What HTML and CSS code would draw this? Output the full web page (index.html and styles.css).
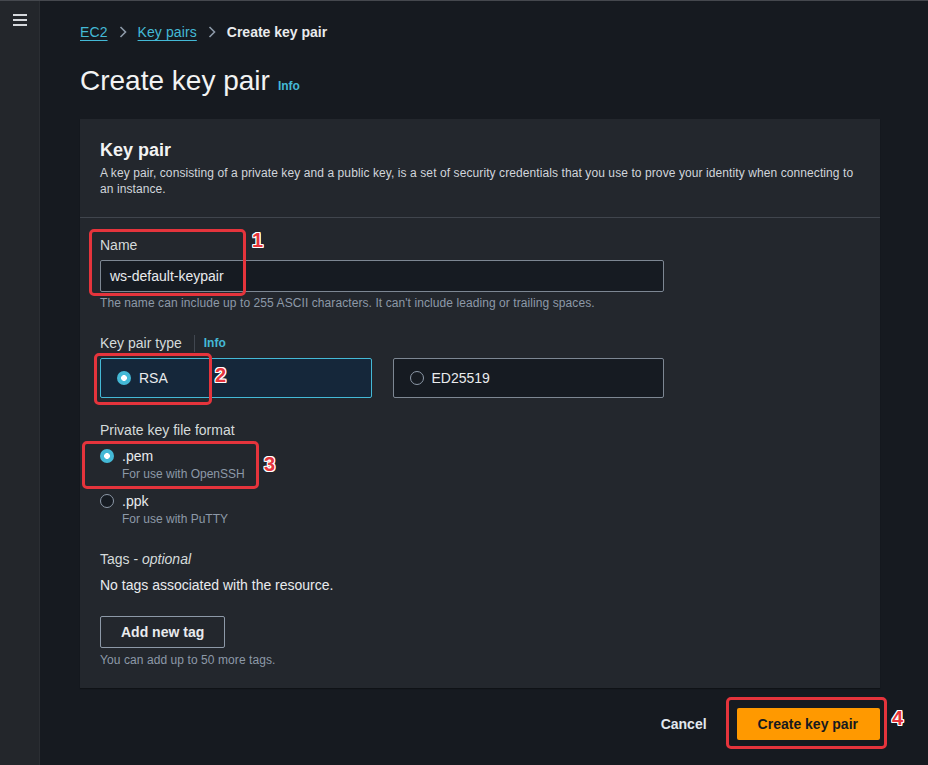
FILE: index.html
```html
<!DOCTYPE html>
<html lang="en">
<head>
<meta charset="utf-8">
<title>Create key pair</title>
<link rel="stylesheet" href="styles.css">
</head>
<body>
<div class="app">
  <aside class="sidebar">
    <svg class="burger" width="14" height="12" viewBox="0 0 14 12"><rect x="0" y="0" width="14" height="2"/><rect x="0" y="5" width="14" height="2"/><rect x="0" y="10" width="14" height="2"/></svg>
  </aside>
  <main class="page">
    <nav class="crumbs">
      <a class="link" href="#">EC2</a>
      <svg class="chev" width="8" height="12" viewBox="0 0 8 12"><path d="M1.5 1 L6.5 6 L1.5 11" fill="none" stroke-width="1.6"/></svg>
      <a class="link" href="#">Key pairs</a>
      <svg class="chev" width="8" height="12" viewBox="0 0 8 12"><path d="M1.5 1 L6.5 6 L1.5 11" fill="none" stroke-width="1.6"/></svg>
      <span class="current">Create key pair</span>
    </nav>
    <h1 class="title"><span>Create key pair</span><span class="info">Info</span></h1>

    <section class="card">
      <header class="card-head">
        <h2 class="card-title">Key pair</h2>
        <p class="card-desc">A key pair, consisting of a private key and a public key, is a set of security credentials that you use to prove your identity when connecting to an instance.</p>
      </header>
      <div class="card-body">
        <div class="field">
          <label class="label">Name</label>
          <div class="input">ws-default-keypair</div>
          <p class="hint">The name can include up to 255 ASCII characters. It can't include leading or trailing spaces.</p>
        </div>

        <div class="field gap">
          <div class="label with-info"><span>Key pair type</span><span class="sep"></span><span class="info">Info</span></div>
          <div class="tiles">
            <div class="tile selected"><span class="radio on"></span><span>RSA</span></div>
            <div class="tile"><span class="radio"></span><span>ED25519</span></div>
          </div>
        </div>

        <div class="field gap">
          <div class="label">Private key file format</div>
          <div class="options">
            <div class="option">
              <span class="radio on"></span>
              <div class="opt-text"><div class="opt-name">.pem</div><div class="opt-desc">For use with OpenSSH</div></div>
            </div>
            <div class="option">
              <span class="radio"></span>
              <div class="opt-text"><div class="opt-name">.ppk</div><div class="opt-desc">For use with PuTTY</div></div>
            </div>
          </div>
        </div>

        <div class="field gap">
          <div class="label">Tags - <i>optional</i></div>
          <p class="empty">No tags associated with the resource.</p>
          <button class="btn-normal">Add new tag</button>
          <p class="hint small-gap">You can add up to 50 more tags.</p>
        </div>
      </div>
    </section>

    <footer class="actions">
      <button class="btn-link">Cancel</button>
      <button class="btn-primary">Create key pair</button>
    </footer>

    <div class="mark m1"></div><span class="num n1">1</span>
    <div class="mark m2"></div><span class="num n2">2</span>
    <div class="mark m3"></div><span class="num n3">3</span>
    <div class="mark m4"></div><span class="num n4">4</span>
  </main>
</div>
</body>
</html>
```

FILE: styles.css
```css
* { box-sizing: border-box; }
html, body { margin: 0; padding: 0; }
body {
  background: #161a20;
  color: #d1d5db;
  font-family: "Liberation Sans", Arial, sans-serif;
  font-size: 14px;
  border-top: 1px solid #45484e;
}
.app { display: flex; min-height: 764px; }
.sidebar {
  width: 40px;
  flex: none;
  background: #23262b;
  border-right: 1px solid #2b2e33;
  padding: 13px 0 0 13px;
}
.burger { display: block; fill: #d5d8dc; }
.page {
  position: relative;
  flex: 1;
  padding: 0 48px 0 40px;
}
.crumbs {
  display: flex;
  align-items: center;
  height: 20px;
  margin-top: 21px;
  gap: 11px;
}
.link { color: #44b9d6; text-decoration: underline; text-underline-offset: 3px; letter-spacing: 0.1px; }
.chev { stroke: #8d99a8; }
.current { font-weight: bold; color: #e9ebed; }
.title {
  display: flex;
  align-items: baseline;
  gap: 8px;
  margin: 20px 0 0 0;
  height: 37px;
  font-size: 28px;
  font-weight: normal;
  line-height: 37px;
  color: #f2f3f3;
}
.info { font-size: 12px; font-weight: bold; color: #44b9d6; }
.card {
  margin-top: 20px;
  background: #23272d;
  box-shadow: 0 1px 1px rgba(0,0,0,0.3);
}
.card-head {
  padding: 20px 20px 20px 20px;
  border-bottom: 1px solid #40454d;
}
.card-title {
  margin: 0;
  font-size: 18px;
  line-height: 22px;
  font-weight: bold;
  color: #f2f3f3;
}
.card-desc {
  margin: 4px 0 0 0;
  font-size: 12px;
  line-height: 16px;
  letter-spacing: 0.09px;
  color: #d1d5db;
}
.card-body { padding: 17px 20px 20px 20px; }
.field { max-width: 564px; }
.field.gap { margin-top: 22px; }
.label {
  display: block;
  line-height: 20px;
  color: #d5dbdb;
}
.with-info { display: flex; align-items: center; }
.sep { width: 1px; height: 17px; background: #414750; margin: 0 9px 0 12px; }
.input {
  margin-top: 5px;
  height: 32px;
  border: 1px solid #7d8793;
  border-radius: 2px;
  background: #161b22;
  color: #e9ebed;
  line-height: 30px;
  padding: 0 9px;
}
.hint {
  margin: 3px 0 0 0;
  font-size: 12px;
  line-height: 16px;
  letter-spacing: 0.08px;
  color: #8d99a8;
}
.hint.small-gap { margin-top: 4px; }
.tiles {
  margin-top: 5px;
  display: grid;
  grid-template-columns: 1fr 1fr;
  gap: 21px;
}
.tile {
  height: 40px;
  border: 1px solid #7d8793;
  border-radius: 2px;
  background: #161b22;
  display: flex;
  align-items: center;
  gap: 8px;
  padding-left: 16px;
  color: #e9ebed;
}
.tile.selected { border-color: #44b9d6; background: #15273a; }
.radio {
  width: 14px;
  height: 14px;
  flex: none;
  border-radius: 50%;
  border: 1.5px solid #8d99a8;
  background: #161b22;
  display: inline-block;
}
.radio.on {
  border: none;
  background: radial-gradient(circle, #ffffff 0 2.6px, #44b9d6 3.2px);
}
.options { margin-top: 6px; display: flex; flex-direction: column; gap: 9px; }
.option { display: flex; gap: 8px; }
.option .radio { margin-top: 3px; }
.opt-name { line-height: 20px; color: #e9ebed; }
.opt-desc { font-size: 12px; line-height: 16px; color: #8d99a8; }
.empty { margin: 6px 0 0 0; line-height: 20px; color: #e9ebed; }
.btn-normal {
  margin-top: 21px;
  height: 32px;
  padding: 0 20px;
  background: transparent;
  border: 1px solid #8d99a8;
  border-radius: 2px;
  color: #e9ebed;
  font: bold 14px "Liberation Sans", Arial, sans-serif;
  display: block;
}
.actions {
  display: flex;
  justify-content: flex-end;
  align-items: center;
  gap: 30px;
  margin-top: 20px;
}
.btn-link {
  background: none;
  border: none;
  padding: 0;
  color: #e2e8ee;
  font: bold 14px "Liberation Sans", Arial, sans-serif;
}
.btn-primary {
  height: 32px;
  padding: 0 22px 0 21px;
  background: #ff9900;
  border: none;
  border-radius: 2px;
  color: #16191f;
  font: bold 14px "Liberation Sans", Arial, sans-serif;
}
.mark {
  position: absolute;
  border: 3px solid #e5343c;
  border-radius: 5px;
}
.m1 { left: 49px; top: 228px; width: 157px; height: 67px; }
.m2 { left: 54px; top: 352px; width: 118px; height: 52px; }
.m3 { left: 42px; top: 440px; width: 177px; height: 48px; }
.m4 { left: 686px; top: 696px; width: 161px; height: 52px; }
.num {
  position: absolute;
  font: bold 20px "Liberation Sans", Arial, sans-serif;
  line-height: 20px;
  color: #e5343c;
  text-shadow: -1px -1px 0 #fff, 1px -1px 0 #fff, -1px 1px 0 #fff, 1px 1px 0 #fff, 0 1px 0 #fff, 0 -1px 0 #fff, 1px 0 0 #fff, -1px 0 0 #fff;
}
.n1 { left: 212px; top: 229px; }
.n2 { left: 175px; top: 364px; }
.n3 { left: 224px; top: 453px; }
.n4 { left: 852px; top: 707px; }
```
